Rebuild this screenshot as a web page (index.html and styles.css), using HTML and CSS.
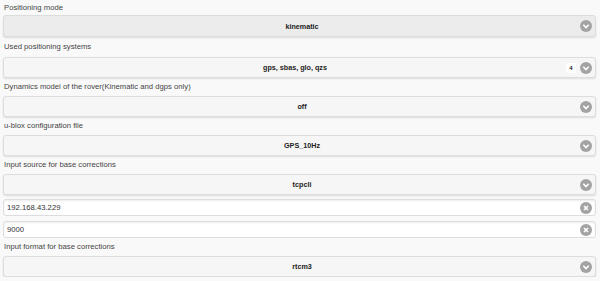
FILE: index.html
```html
<!DOCTYPE html>
<html lang="en">
<head>
    <meta charset="UTF-8">
    <meta name="viewport" content="width=device-width, initial-scale=1.0">
    <title>Settings</title>
    <link rel="stylesheet" href="styles.css">
</head>
<body>
    <div class="form">
        <div class="field first">
            <div class="label">Positioning mode</div>
            <div class="select active">
                <span class="value">kinematic</span>
                <span class="icon"><svg viewBox="0 0 12 12"><circle cx="6" cy="6" r="6"/><path d="M3.3 4.8 6 7.5 8.7 4.8"/></svg></span>
            </div>
        </div>

        <div class="field multi">
            <div class="label">Used positioning systems</div>
            <div class="select">
                <span class="value">gps, sbas, glo, qzs</span>
                <span class="count">4</span>
                <span class="icon"><svg viewBox="0 0 12 12"><circle cx="6" cy="6" r="6"/><path d="M3.3 4.8 6 7.5 8.7 4.8"/></svg></span>
            </div>
        </div>

        <div class="field">
            <div class="label">Dynamics model of the rover(Kinematic and dgps only)</div>
            <div class="select">
                <span class="value">off</span>
                <span class="icon"><svg viewBox="0 0 12 12"><circle cx="6" cy="6" r="6"/><path d="M3.3 4.8 6 7.5 8.7 4.8"/></svg></span>
            </div>
        </div>

        <div class="field">
            <div class="label">u-blox configuration file</div>
            <div class="select">
                <span class="value">GPS_10Hz</span>
                <span class="icon"><svg viewBox="0 0 12 12"><circle cx="6" cy="6" r="6"/><path d="M3.3 4.8 6 7.5 8.7 4.8"/></svg></span>
            </div>
        </div>

        <div class="field">
            <div class="label">Input source for base corrections</div>
            <div class="select">
                <span class="value">tcpcli</span>
                <span class="icon"><svg viewBox="0 0 12 12"><circle cx="6" cy="6" r="6"/><path d="M3.3 4.8 6 7.5 8.7 4.8"/></svg></span>
            </div>
            <div class="input">
                <span class="text">192.168.43.229</span>
                <span class="icon"><svg viewBox="0 0 12 12"><circle cx="6" cy="6" r="6"/><path d="M4 4 8 8M8 4 4 8"/></svg></span>
            </div>
            <div class="input">
                <span class="text">9000</span>
                <span class="icon"><svg viewBox="0 0 12 12"><circle cx="6" cy="6" r="6"/><path d="M4 4 8 8M8 4 4 8"/></svg></span>
            </div>
        </div>

        <div class="field">
            <div class="label">Input format for base corrections</div>
            <div class="select">
                <span class="value">rtcm3</span>
                <span class="icon"><svg viewBox="0 0 12 12"><circle cx="6" cy="6" r="6"/><path d="M3.3 4.8 6 7.5 8.7 4.8"/></svg></span>
            </div>
        </div>
    </div>
</body>
</html>
```

FILE: styles.css
```css
body {
    margin: 0;
    background: #f9f9f9;
    font-family: "Liberation Sans", Arial, sans-serif;
    font-size: 7.7px;
    color: #444;
}
.form {
    padding: 0 4px 0 3px;
}
.label {
    height: 18px;
    line-height: 18px;
    padding-left: 1px;
}
.first .label {
    height: 15px;
    line-height: 15px;
}
.multi .label {
    height: 20px;
    line-height: 20px;
}
.select {
    display: flex;
    align-items: center;
    height: 21px;
    box-sizing: border-box;
    background: #f6f6f6;
    border: 1px solid #dddddd;
    border-radius: 3px;
    box-shadow: 0 1px 2px rgba(0, 0, 0, 0.12);
    padding: 0 3px 0 8px;
}
.first .select {
    height: 22px;
}
.select.active {
    background: #ececec;
}
.select .value {
    flex: 1;
    text-align: center;
    font-size: 7.2px;
    font-weight: bold;
    color: #222;
    padding-left: 12px;
}
.count {
    width: 10px;
    height: 10px;
    line-height: 10px;
    text-align: center;
    background: #fff;
    border-radius: 2px;
    font-size: 6px;
    font-weight: bold;
    color: #222;
    margin-right: 4px;
}
.icon {
    width: 12px;
    height: 12px;
}
.icon svg {
    display: block;
    width: 12px;
    height: 12px;
}
.icon circle {
    fill: #a3a3a3;
}
.icon path {
    fill: none;
    stroke: #fff;
    stroke-width: 1.6;
}
.input {
    display: flex;
    align-items: center;
    height: 17px;
    box-sizing: border-box;
    margin-top: 4px;
    background: #fff;
    border: 1px solid #dddddd;
    border-radius: 3px;
    box-shadow: inset 0 1px 2px rgba(0, 0, 0, 0.08);
    padding: 0 3px 0 3px;
}
.input + .input {
    margin-top: 5px;
}
.input .text {
    flex: 1;
    color: #333;
}
```
